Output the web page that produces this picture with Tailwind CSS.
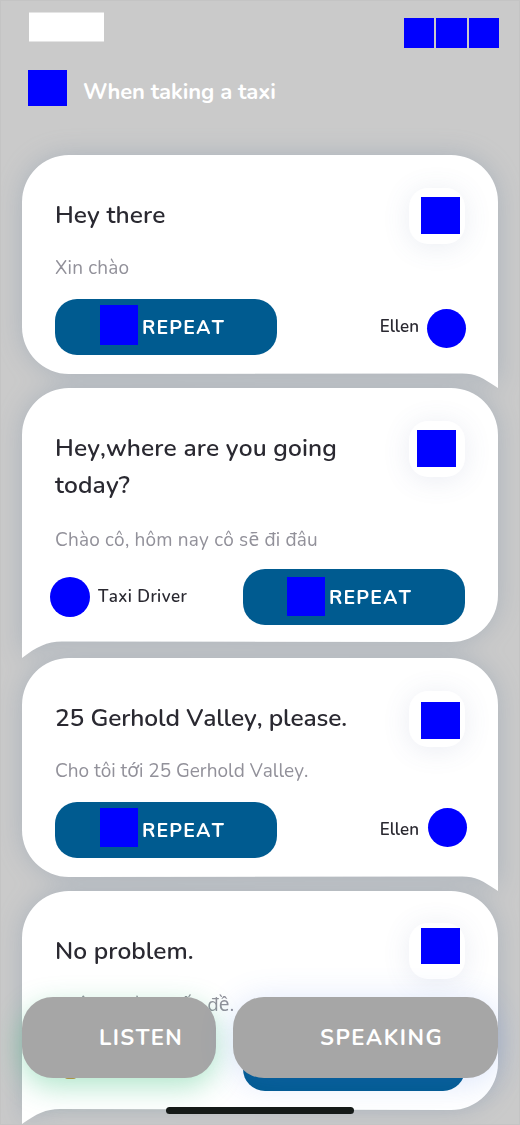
<!DOCTYPE html>
<html lang="en">
<head>
<meta charset="utf-8">
<title>When taking a taxi</title>
<script src="https://cdn.jsdelivr.net/npm/@tailwindcss/browser@4"></script>
</head>
<body class="bg-[#cacaca]">
<div class="relative w-[520px] h-[1125px] overflow-hidden bg-[#cacaca] border border-[#c4c4c4] font-[Nunito,Lato,'Noto_Sans',sans-serif] font-[560] text-[#2a2931] [font-kerning:none]">
<div class="-m-px">
  <div class="flex justify-between pl-[29px] pr-[21px] h-[70px]">
    <div class="mt-[12px] w-[75px] h-[30px] bg-white border-y border-[#e4e4e4]"></div>
    <div class="mt-[18px] flex gap-[2px] h-[30px]">
      <div class="w-[30px] bg-[#0000ff]"></div><div class="w-[31px] bg-[#0000ff]"></div><div class="w-[30px] bg-[#0000ff]"></div>
    </div>
  </div>
  <header class="flex h-[85px] pl-[28px]">
    <div class="w-[39px] h-[36px] bg-[#0000ff]"></div>
    <h1 class="ml-[16px] mt-[6px] text-[22px] leading-[33px] tracking-[-0.08px] font-bold text-white whitespace-nowrap">When taking a taxi</h1>
  </header>

  <main class="mx-[22px] [filter:drop-shadow(0_0_12px_rgba(110,135,160,0.34))]">
    <section class="relative h-[233px] pl-[33px] pr-[33px]">
      <svg class="absolute inset-0" width="476" height="233" fill="#fff"><path d="M47 0H429A47 47 0 0 1 476 47V233C460 222 452 218 438 218.500L47 219A47 47 0 0 1 0 172V47A47 47 0 0 1 47 0Z"/></svg>
      <div class="relative flex justify-between h-[92px] pt-[33px]">
        <h2 class="mt-[9px] text-[24.500px] leading-[37px] tracking-[0.08px] whitespace-nowrap">Hey there</h2>
        <div class="shrink-0 w-[56px] h-[56px] rounded-[19px] bg-white shadow-[0_3px_28px_rgba(80,110,160,0.12)] pl-[12px] pt-[9px]"><div class="w-[39px] h-[37px] bg-[#0000ff]"></div></div>
      </div>
      <p class="relative mt-[8px] h-[44px] text-[19px] leading-[26px] tracking-[0.2px] font-normal text-[#92919a]">Xin chào</p>
      <div class="relative flex justify-between">
        <div class="flex w-[222px] h-[56px] rounded-[22px] bg-[#005b90] pl-[45px] pt-[6px] text-white"><div class="w-[38px] h-[40px] bg-[#0000ff]"></div><span class="ml-[4px] mt-[7px] text-[19.500px] leading-[32px] font-bold tracking-[1.15px]">REPEAT</span></div>
        <div class="flex -mr-[1px] mt-[9px]"><span class="mt-[7px] text-[17px] leading-[24px]">Ellen</span><div class="ml-[8px] w-[39px] h-[39px] mt-[1px] rounded-full bg-[#0000ff]"></div></div>
      </div>
    </section>

    <section class="relative h-[270px] pl-[33px] pr-[33px]">
      <svg class="absolute inset-0" width="476" height="270" fill="#fff"><path d="M47 0H429A47 47 0 0 1 476 47V207A47 47 0 0 1 429 254L40 253.500C25 253.500 14 259 0 270V47A47 47 0 0 1 47 0Z"/></svg>
      <div class="relative flex justify-between h-[129px] pt-[33px]">
        <h2 class="mt-[9px] text-[24.500px] leading-[37px] tracking-[0.12px] whitespace-nowrap">Hey,where are you going<br>today?</h2>
        <div class="shrink-0 w-[56px] h-[56px] rounded-[19px] bg-white shadow-[0_3px_28px_rgba(80,100,160,0.12)] pl-[8px] pt-[9px]"><div class="w-[39px] h-[37px] bg-[#0000ff]"></div></div>
      </div>
      <p class="relative mt-[10px] h-[42px] text-[19px] leading-[26px] tracking-[0.2px] font-normal text-[#92919a] whitespace-nowrap">Chào cô, hôm nay cô s<span class="font-['Noto_Sans'] leading-none">ẽ</span> đi đâu</p>
      <div class="relative flex justify-between">
        <div class="flex -ml-[5px] mt-[8px]"><div class="w-[40px] h-[40px] rounded-full bg-[#0000ff]"></div><span class="ml-[8px] mt-[8px] text-[17px] leading-[24px] tracking-[0.4px]">Taxi Driver</span></div>
        <div class="flex w-[222px] h-[56px] rounded-[22px] bg-[#005b90] pl-[44px] pt-[8px] text-white"><div class="w-[38px] h-[39px] bg-[#0000ff]"></div><span class="ml-[4px] mt-[5px] text-[19.500px] leading-[32px] font-bold tracking-[1.15px]">REPEAT</span></div>
      </div>
    </section>

    <section class="relative h-[233px] pl-[33px] pr-[33px]">
      <svg class="absolute inset-0" width="476" height="233" fill="#fff"><path d="M47 0H429A47 47 0 0 1 476 47V233C460 222 452 218 438 218.500L47 219A47 47 0 0 1 0 172V47A47 47 0 0 1 47 0Z"/></svg>
      <div class="relative flex justify-between h-[92px] pt-[33px]">
        <h2 class="mt-[9px] text-[24.500px] leading-[37px] tracking-[-0.12px] whitespace-nowrap">25 Gerhold Valley, please.</h2>
        <div class="shrink-0 w-[56px] h-[56px] rounded-[19px] bg-white shadow-[0_3px_28px_rgba(80,100,160,0.12)] pl-[12px] pt-[11px]"><div class="w-[39px] h-[37px] bg-[#0000ff]"></div></div>
      </div>
      <p class="relative mt-[8px] h-[44px] text-[19px] leading-[26px] font-normal text-[#92919a] whitespace-nowrap">Cho tôi t<span class="font-['Noto_Sans'] leading-none">ớ</span>i 25 Gerhold Valley.</p>
      <div class="relative flex justify-between">
        <div class="flex w-[222px] h-[56px] rounded-[22px] bg-[#005b90] pl-[45px] pt-[6px] text-white"><div class="w-[38px] h-[39px] bg-[#0000ff]"></div><span class="ml-[4px] mt-[7px] text-[19.500px] leading-[32px] font-bold tracking-[1.15px]">REPEAT</span></div>
        <div class="flex -mr-[2px] mt-[6px]"><span class="mt-[10px] text-[17px] leading-[24px]">Ellen</span><div class="ml-[9px] w-[39px] h-[39px] rounded-full bg-[#0000ff]"></div></div>
      </div>
    </section>

    <section class="relative h-[233px] pl-[33px] pr-[33px]">
      <svg class="absolute inset-0" width="476" height="233" fill="#fff"><path d="M47 0H429A47 47 0 0 1 476 47V172A47 47 0 0 1 429 219L38 218C24 218 14 223 0 233V47A47 47 0 0 1 47 0Z"/></svg>
      <div class="relative flex justify-between h-[92px] pt-[32px]">
        <h2 class="mt-[10px] text-[24.500px] leading-[37px] tracking-[0.05px] whitespace-nowrap">No problem.</h2>
        <div class="shrink-0 w-[56px] h-[56px] rounded-[19px] bg-white shadow-[0_3px_28px_rgba(80,100,160,0.12)] pl-[12px] pt-[5px]"><div class="w-[39px] h-[36px] bg-[#0000ff]"></div></div>
      </div>
      <p class="relative mt-[9px] h-[43px] text-[19px] leading-[26px] tracking-[0.15px] font-normal text-[#92919a] whitespace-nowrap">Không thành v<span class="font-['Noto_Sans'] leading-none">ấ</span>n đ<span class="font-['Noto_Sans'] leading-none">ề</span>.</p>
      <div class="relative flex justify-between">
        <div class="ml-[9px] mt-[40px] w-[13px] h-[4px] rounded-b bg-[#d98a35]"></div>
        <div class="w-[222px] h-[56px] rounded-[22px] bg-[#005b90]"></div>
      </div>
    </section>
  </main>

  <nav class="absolute left-[21px] top-[996px] flex gap-[17px] text-white text-[22px] leading-[82px] font-bold">
    <div class="w-[194px] h-[81px] rounded-[31px] bg-[#a6a6a6] pl-[77px] tracking-[1.4px] shadow-[0_9px_28px_rgba(40,185,115,0.36)]">LISTEN</div>
    <div class="w-[265px] h-[81px] rounded-[31px] bg-[#a6a6a6] pl-[87px] tracking-[1.5px] shadow-[0_4px_34px_rgba(70,120,235,0.2)]">SPEAKING</div>
  </nav>
  <div class="absolute left-[165px] top-[1106px] w-[188px] h-[7px] rounded-full bg-[#151a18]"></div>
</div>
</div>
</body>
</html>
